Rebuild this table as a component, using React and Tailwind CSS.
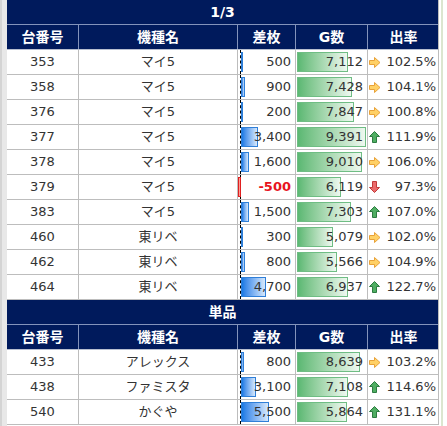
const NAVY = "bg-[#001a5c]";

const rows1 = [
  { no: 353, name: "マイ5", sa: 500, sw: 2, g: "7,112", gw: 51, dir: "right", rate: "102.5%" },
  { no: 358, name: "マイ5", sa: 900, sw: 4, g: "7,428", gw: 55, dir: "right", rate: "104.1%" },
  { no: 376, name: "マイ5", sa: 200, sw: 1, g: "7,847", gw: 57, dir: "right", rate: "100.8%" },
  { no: 377, name: "マイ5", sa: 3400, sw: 17, g: "9,391", gw: 69, dir: "up", rate: "111.9%" },
  { no: 378, name: "マイ5", sa: 1600, sw: 8, g: "9,010", gw: 65, dir: "right", rate: "106.0%" },
  { no: 379, name: "マイ5", sa: -500, sw: 3, g: "6,119", gw: 44, dir: "down", rate: "97.3%" },
  { no: 383, name: "マイ5", sa: 1500, sw: 8, g: "7,303", gw: 54, dir: "up", rate: "107.0%" },
  { no: 460, name: "東リベ", sa: 300, sw: 1, g: "5,079", gw: 36, dir: "right", rate: "102.0%" },
  { no: 462, name: "東リベ", sa: 800, sw: 4, g: "5,566", gw: 40, dir: "right", rate: "104.9%" },
  { no: 464, name: "東リベ", sa: 4700, sw: 25, g: "6,937", gw: 51, dir: "up", rate: "122.7%" },
];

const rows2 = [
  { no: 433, name: "アレックス", sa: 800, sw: 3, g: "8,639", gw: 63, dir: "right", rate: "103.2%" },
  { no: 438, name: "ファミスタ", sa: 3100, sw: 15, g: "7,108", gw: 51, dir: "up", rate: "114.6%" },
  { no: 540, name: "かぐや", sa: 5500, sw: 28, g: "5,864", gw: 50, dir: "up", rate: "131.1%" },
];

const COLS = "grid grid-cols-[72px_159px_58px_72px_71px] h-[25px]";

const Arrow = ({ dir }) => {
  if (dir === "up")
    return (
      <svg width="11" height="12" viewBox="0 0 11 12">
        <path d="M5.5 0.5 L10.5 5.5 L7.5 5.5 L7.5 11.5 L3.5 11.5 L3.5 5.5 L0.5 5.5 Z" fill="#4fae62" stroke="#2d7a40" strokeWidth="1" />
      </svg>
    );
  if (dir === "down")
    return (
      <svg width="11" height="12" viewBox="0 0 11 12">
        <path d="M5.5 11.5 L10.5 6.5 L7.5 6.5 L7.5 0.5 L3.5 0.5 L3.5 6.5 L0.5 6.5 Z" fill="#ec6b6b" stroke="#c03a3a" strokeWidth="1" />
      </svg>
    );
  return (
    <svg width="12" height="11" viewBox="0 0 12 11">
      <path d="M0.5 3.5 L5.5 3.5 L5.5 0.5 L11 5.5 L5.5 10.5 L5.5 7.5 L0.5 7.5 Z" fill="#ffd166" stroke="#e8a23a" strokeWidth="1" />
    </svg>
  );
};

const Header = ({ title }) => (
  <>
    <div className={`${NAVY} h-[25px] flex items-center justify-center text-white font-bold text-[14px] border-b border-[#8393bb]`}>
      {title}
    </div>
    <div className={`${COLS} ${NAVY} text-white font-bold text-[14px] border-b border-[#b8bfd0]`}>
      {["台番号", "機種名", "差枚", "G数", "出率"].map((h, i) => (
        <div key={h} className={`flex items-center justify-center ${i < 4 ? "border-r border-[#8393bb]" : ""}`}>
          {h}
        </div>
      ))}
    </div>
  </>
);

const Row = ({ r }) => (
  <div className={`${COLS} text-[#333] border-b border-[#bdbdbd]`}>
    <div className="flex items-center justify-center border-r border-[#bdbdbd]">{r.no}</div>
    <div className="flex items-center justify-center border-r border-[#bdbdbd]">{r.name}</div>
    <div className="relative flex items-center justify-end pr-[4px] border-r border-[#bdbdbd]">
      <div className="absolute left-[2px] top-0 bottom-0 border-l border-dashed border-black" />
      {r.sa > 0 ? (
        <div
          className="absolute left-[3px] top-[2px] bottom-[2px] border border-[#2f7fd8] bg-gradient-to-r from-[#1479e4] to-[#d6e8fb]"
          style={{ width: r.sw }}
        />
      ) : (
        <div
          className="absolute left-0 top-[2px] bottom-[2px] border border-[#e02020] bg-gradient-to-l from-[#ff4040] to-[#ffe0e0]"
          style={{ width: r.sw }}
        />
      )}
      <span className={`relative ${r.sa < 0 ? "text-[#e8141e] font-bold" : ""}`}>{r.sa.toLocaleString("en-US")}</span>
    </div>
    <div className="relative flex items-center justify-end pr-[4px] border-r border-[#bdbdbd]">
      <div
        className="absolute left-[1px] top-[2px] bottom-[2px] border border-[#6fbd84] bg-gradient-to-r from-[#5bb873] to-[#eef8f0]"
        style={{ width: r.gw }}
      />
      <span className="relative">{r.g}</span>
    </div>
    <div className="flex items-center justify-between pl-[1px] pr-[3px]">
      <Arrow dir={r.dir} />
      <span>{r.rate}</span>
    </div>
  </div>
);

export default function App() {
  return (
    <div
      className="w-[447px] h-[426px] flex bg-white text-[13px] overflow-hidden"
      style={{ fontFamily: '"DejaVu Sans", "Noto Sans CJK JP", sans-serif' }}
    >
      <div className="w-[7px] bg-[#e8e8e8] border-l-2 border-[#d4d4d4]" />
      <div className="w-[432px] border-r border-[#bdbdbd] self-start">
        <Header title="1/3" />
        {rows1.map((r) => (
          <Row key={r.no} r={r} />
        ))}
        <Header title="単品" />
        {rows2.map((r) => (
          <Row key={r.no} r={r} />
        ))}
      </div>
      <div className="w-[2px]" />
      <div className="w-[2px] bg-[#dbe6cf]" />
    </div>
  );
}
